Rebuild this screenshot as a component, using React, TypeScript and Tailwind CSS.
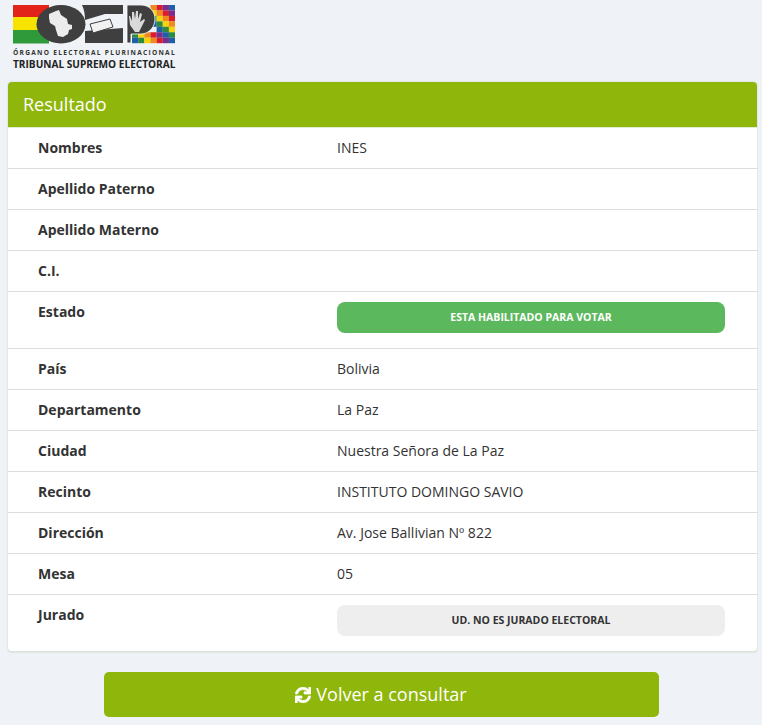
import { FaSync } from "react-icons/fa";

type Row = { label: string; value?: string; badge?: "success" | "muted" };

const ROWS: Row[] = [
  { label: "Nombres", value: "INES" },
  { label: "Apellido Paterno" },
  { label: "Apellido Materno" },
  { label: "C.I." },
  { label: "Estado", value: "ESTA HABILITADO PARA VOTAR", badge: "success" },
  { label: "País", value: "Bolivia" },
  { label: "Departamento", value: "La Paz" },
  { label: "Ciudad", value: "Nuestra Señora de La Paz" },
  { label: "Recinto", value: "INSTITUTO DOMINGO SAVIO" },
  { label: "Dirección", value: "Av. Jose Ballivian Nº 822" },
  { label: "Mesa", value: "05" },
  { label: "Jurado", value: "UD. NO ES JURADO ELECTORAL", badge: "muted" },
];

const WIPHALA = ["#d81e2c", "#7b2d8e", "#1f5fa8", "#2e8b3d", "#f6d20f", "#f08a1d"];

function Logo() {
  const cells = [];
  for (let r = 0; r < 7; r++) {
    for (let c = 0; c < 7; c++) {
      // la parte central-izquierda queda en blanco, detrás de la P
      if (r <= 4 && c < 3) continue;
      if (r === 4 && c === 3) continue;
      cells.push(
        <rect
          key={`${r}-${c}`}
          x={119 + c * 6.15}
          y={r * 5.45}
          width={6.2}
          height={5.5}
          fill={WIPHALA[(c - r + 14) % 6]}
        />
      );
    }
  }
  return (
    <div className="w-[162px]">
      <svg width="162" height="39" viewBox="0 0 162 39" className="block">
        <rect x="0" y="0" width="36" height="12" fill="#e2231a" />
        <rect x="0" y="12" width="36" height="13" fill="#f7e300" />
        <rect x="0" y="25" width="36" height="13.5" fill="#2f9a3a" />
        {cells}
        <ellipse cx="48" cy="19.2" rx="24.5" ry="19.2" fill="#3f3f3f" />
        <path d="M36 9l7-3 3-1 2 5 6 4 1 5 4 1 0 4-3 1-1 4-5 3-5-1-2-6-1-4-5-3-1-5z" fill="#ececec" />
        <path d="M69 0h41v9H92L72 15C72 9 71 4 69 0zM72 26l38-3v15H72z" fill="#3f3f3f" />
        <path d="M77 19l20-5 3 8-20 6z" fill="#f2f2f2" stroke="#3f3f3f" strokeWidth="1" />
        <path
          d="M114 0h14c8 0 14 6 14 14s-6 15-14 15h-10v9h-4z"
          fill="#3f3f3f"
          stroke="#ffffff"
          strokeWidth="0.8"
        />
        <path d="M122 27l-5-7-1-9 1 0 2 5 0-9 2 0 1 7 1-8 2 0 0 8 2-6 2 1-2 8 4-3 1 1-4 8-2 4z" fill="#d9d9d9" />
      </svg>
      <p className="mt-[4px] text-[6.6px] leading-[9px] font-bold tracking-[1.28px] whitespace-nowrap text-[#333]">
        ÓRGANO ELECTORAL PLURINACIONAL
      </p>
      <p className="mt-[2px] text-[10.1px] leading-[11px] font-bold whitespace-nowrap text-[#222]">
        TRIBUNAL SUPREMO ELECTORAL
      </p>
    </div>
  );
}

export default function App() {
  return (
    <div className="min-h-[725px] bg-[#eff3f7] font-['Open_Sans',sans-serif] text-[14px] text-[#333]">
      <div className="h-[82px] pt-[5px] pl-[13px]">
        <Logo />
      </div>

      <div className="mx-[8px] w-[749px] overflow-hidden rounded-[4px] border-b border-[#dde3d8] bg-white shadow-[0_0_2px_rgba(100,120,60,0.35)]">
        <div className="h-[46px] border-b border-[#e3ecd0] bg-[#8fb60a] pl-[15px] text-[18px] leading-[45px] text-white">
          Resultado
        </div>
        {ROWS.map((row, i) => (
          <div
            key={row.label}
            className={`flex pt-[10px] pl-[30px] ${
              i === ROWS.length - 1 ? "h-[56px]" : row.badge ? "h-[57px] border-b border-[#dddddd]" : "h-[41px] border-b border-[#dddddd]"
            }`}
          >
            <div className="w-[299px] shrink-0 leading-[20px] font-bold text-[#333]">{row.label}</div>
            {row.badge ? (
              <div
                className={`h-[31px] w-[388px] rounded-[8px] text-center text-[10.5px] leading-[31px] font-bold ${
                  row.badge === "success" ? "bg-[#5cb85c] text-white" : "bg-[#eeeeee] text-[#333]"
                }`}
              >
                {row.value}
              </div>
            ) : (
              <div className="leading-[20px] text-[#333]">{row.value}</div>
            )}
          </div>
        ))}
      </div>

      <div className="mt-[20px] flex justify-center">
        <button className="flex h-[45px] w-[555px] items-center justify-center gap-[5px] rounded-[5px] bg-[#8fb60a] text-[18px] text-white">
          <FaSync className="h-[16px] w-[16px]" stroke="currentColor" strokeWidth={24} />
          Volver a consultar
        </button>
      </div>
    </div>
  );
}
